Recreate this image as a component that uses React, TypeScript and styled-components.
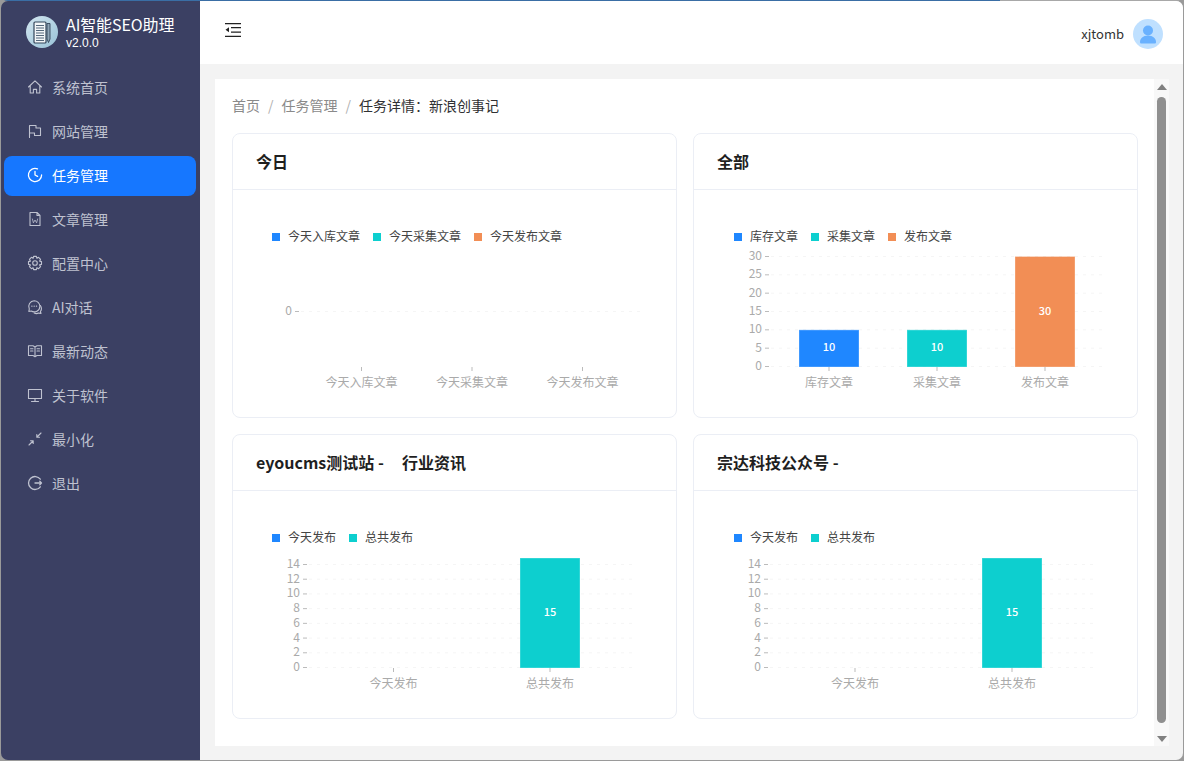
import React from 'react';
import styled, { createGlobalStyle } from 'styled-components';

const GlobalStyle = createGlobalStyle`
  html, body, #root {
    margin: 0;
    height: 100%;
    overflow: hidden;
  }
  body {
    background: #9a9a9a;
    font-family: "Noto Sans CJK SC", "Liberation Sans", sans-serif;
  }
  * {
    box-sizing: border-box;
  }
`;

const Window = styled.div`
  display: flex;
  height: 761px;
  padding: 1px;
  border-radius: 8px;
  overflow: hidden;
  background: linear-gradient(90deg, #3a6ea5 1000px, #a8a8a8 1000px) top / 100% 1px no-repeat, #9a9a9a;
`;

const Sidebar = styled.aside`
  width: 199px;
  flex: none;
  background: #3b4063;
  padding-top: 13px;
  border-radius: 7px 0 0 7px;
`;

const Brand = styled.div`
  display: flex;
  align-items: center;
  gap: 8px;
  height: 36px;
  padding-left: 25px;
  margin-bottom: 18px;
`;

const BrandText = styled.div`
  color: #fff;
`;

const BrandName = styled.div`
  font-size: 16px;
  line-height: 20px;
  letter-spacing: -0.1px;
`;

const BrandVersion = styled.div`
  margin-top: 2px;
  font-family: "Liberation Sans", sans-serif;
  font-size: 12px;
  line-height: 14px;
`;

const Menu = styled.nav`
  display: flex;
  flex-direction: column;
  gap: 4px;
  padding: 0 4px 0 3px;
`;

const MenuItem = styled.div<{ $active?: boolean }>`
  display: flex;
  align-items: center;
  gap: 9px;
  height: 40px;
  padding: 0 0 2px 23px;
  border-radius: 8px;
  font-size: 14px;
  line-height: 20px;
  color: ${(p) => (p.$active ? '#fff' : '#bfc2d0')};
  background: ${(p) => (p.$active ? '#1677ff' : 'transparent')};
`;

const Main = styled.main`
  flex: 1;
  min-width: 0;
  display: flex;
  flex-direction: column;
  background: #f3f3f3;
  border-radius: 0 7px 7px 0;
  overflow: hidden;
`;

const Header = styled.header`
  height: 63px;
  flex: none;
  background: #fff;
  display: flex;
  align-items: center;
  justify-content: space-between;
  padding: 0 20px 0 24px;
`;

const ToggleIcon = styled.svg`
  margin-bottom: 5px;
`;

const User = styled.div`
  display: flex;
  align-items: center;
  gap: 9px;
  margin-top: 2px;
  font-size: 13px;
  color: #333;
`;

const Avatar = styled.div`
  width: 30px;
  height: 30px;
  border-radius: 50%;
  background: #bfe0ff;
  display: flex;
  align-items: center;
  justify-content: center;
`;

const Content = styled.div`
  flex: 1;
  min-height: 0;
  padding: 15px 14px 14px 15px;
`;

const Panel = styled.div`
  height: 100%;
  background: #fff;
  display: flex;
`;

const Scroller = styled.div`
  flex: 1;
  min-width: 0;
  padding: 0 16px 0 17px;
`;

const Crumbs = styled.div`
  display: flex;
  align-items: center;
  height: 54px;
  padding-bottom: 2px;
  font-size: 14px;
  color: #8a8a8a;
`;

const CrumbSep = styled.span`
  margin: 0 8px;
  color: #b0b0b0;
`;

const CrumbCurrent = styled.span`
  color: #303133;
`;

const Grid = styled.div`
  display: grid;
  grid-template-columns: 1fr 1fr;
  gap: 16px;
`;

const Card = styled.section`
  height: 285px;
  border: 1px solid #ebeef5;
  border-radius: 8px;
  overflow: hidden;
`;

const CardTitle = styled.h3`
  margin: 0 0 1px;
  height: 56px;
  padding: 0 0 2px 23px;
  display: flex;
  align-items: center;
  font-size: 16px;
  font-weight: 700;
  color: #1f1f1f;
  border-bottom: 1px solid #ebeef5;
  white-space: pre;
`;

const ScrollTrack = styled.div`
  width: 15px;
  flex: none;
  background: #f8f8f8;
  display: flex;
  flex-direction: column;
  align-items: center;
  padding-top: 5px;
`;

const ArrowUp = styled.div`
  width: 0;
  height: 0;
  border-left: 5px solid transparent;
  border-right: 5px solid transparent;
  border-bottom: 6px solid #808080;
  margin-bottom: 7px;
`;

const ArrowDown = styled.div`
  width: 0;
  height: 0;
  border-left: 5px solid transparent;
  border-right: 5px solid transparent;
  border-top: 6px solid #808080;
  margin-top: 13px;
`;

const Thumb = styled.div`
  width: 9px;
  height: 626px;
  border-radius: 5px;
  background: #8f8f8f;
`;

const ChartSvg = styled.svg`
  display: block;
`;

const LegendText = styled.text`
  font-size: 12px;
  fill: #444;
`;

const AxisText = styled.text`
  font-size: 12px;
  fill: #aaa;
`;

const BarText = styled.text`
  font-size: 11px;
  font-weight: 500;
  fill: #fff;
  text-anchor: middle;
`;

const BLUE = '#1f87ff';
const TEAL = '#0dcfcf';
const ORANGE = '#f28e55';

type LegendEntry = { x: number; label: string; color: string };
type Bar = { x: number; label: string; value: number; color: string };

type ChartProps = {
  legend: LegendEntry[];
  ticks: number[];
  yTop: number;
  yBottom: number;
  max: number;
  axisX: number;
  gridEnd: number;
  xBase: number;
  bars: Bar[];
  barTop?: number;
};

// coordinates are relative to the card body
const Chart = ({ legend, ticks, yTop, yBottom, max, axisX, gridEnd, xBase, bars, barTop }: ChartProps) => {
  const yOf = (v: number) => (max === 0 ? yTop : yBottom - ((yBottom - yTop) * v) / max);
  return (
    <ChartSvg width="443" height="227" viewBox="0 0 443 227">
      {legend.map((l) => (
        <React.Fragment key={l.label}>
          <rect x={l.x} y={42} width="8" height="8" fill={l.color} />
          <LegendText x={l.x + 16} y={50}>{l.label}</LegendText>
        </React.Fragment>
      ))}
      {ticks.map((t) => (
        <React.Fragment key={t}>
          <line x1={axisX + 6} x2={gridEnd} y1={yOf(t)} y2={yOf(t)} stroke="#f5f5f5" strokeDasharray="3 5" />
          <line x1={axisX} x2={axisX + 4} y1={yOf(t)} y2={yOf(t)} stroke="#bbb" />
          <AxisText x={axisX - 3} y={yOf(t) + 3.5} textAnchor="end">{t}</AxisText>
        </React.Fragment>
      ))}
      {bars.map((b) => {
        const top = b.value > max ? barTop ?? yTop : yOf(b.value);
        return (
          <React.Fragment key={b.label}>
            {b.value > 0 && (
              <>
                <rect x={b.x - 29.5} y={top + 0.5} width="59" height={yBottom - top - 0.5} fill={b.color} stroke={b.color} strokeOpacity="0.7" />
                <BarText x={b.x} y={(top + yBottom) / 2 + 3}>{b.value}</BarText>
              </>
            )}
            <line x1={b.x} x2={b.x} y1={xBase} y2={xBase + 4} stroke="#bbb" />
            <AxisText x={b.x} y={xBase + 20} textAnchor="middle">{b.label}</AxisText>
          </React.Fragment>
        );
      })}
    </ChartSvg>
  );
};

const ICON = { width: 16, height: 16, viewBox: '0 0 16 16', fill: 'none', stroke: 'currentColor', strokeWidth: 1.1, strokeLinejoin: 'round' as const, strokeLinecap: 'round' as const };

const icons: Record<string, React.ReactNode> = {
  home: <svg {...ICON}><path d="M1.5 8 8 1.8 14.5 8M3.2 6.6V14h3.2v-3.6h3.2V14h3.2V6.6" /></svg>,
  flag: <svg {...ICON}><path d="M2.5 14.500V2.500H9V5h4.500v7.500H7.500V10H2.500" /></svg>,
  clock: <svg {...ICON} strokeWidth={1.3}><path d="M10.5 1.9A6.6 6.6 0 1 0 14.6 8" /><path d="M8 4.4V8l2.6 1.4" /></svg>,
  doc: <svg {...ICON}><path d="M3 1.5h7l3 3v10H3zM10 1.5v3h3" /><path d="m5.4 8 1 3.8L8 9l1.6 2.8 1-3.8" strokeWidth={0.8} /></svg>,
  gear: <svg {...ICON}><path d="M6.6 1.4h2.8l.5 1.9 1.7-1 2 2-1 1.8 1.9.5v2.8l-1.9.5 1 1.8-2 2-1.7-1-.5 1.9H6.6l-.5-1.9-1.7 1-2-2 1-1.8L1.500 9.400V6.600l1.900-.5-1-1.800 2-2 1.700 1z" /><circle cx="8" cy="8" r="2.300" /></svg>,
  chat: <svg {...ICON}><path d="M7.200 1.800a5.700 5.700 0 0 1 5.700 5.400A5.700 5.700 0 0 1 4.200 12L1.800 12.500 2.300 10A5.700 5.700 0 0 1 7.200 1.800z" /><path d="M13.400 6.500c1.300 2 1.300 4.300 0 6l.6 1.900-2.400-.3c-1.500.8-3 .7-4.400-.1" /><path d="M4.800 7.200h.2M7.100 7.200h.2M9.400 7.200h.2" strokeWidth={1.200} /></svg>,
  book: <svg {...ICON}><path d="M8 4 6 2.800H1.500v9.700H6L8 13.700 10 12.500h4.500V2.800H10zM8 4v9.700" /><path d="M3.500 5.800h2.500M3.500 8h2.500M10 5.800h2.500M10 8h2.500" /></svg>,
  monitor: <svg {...ICON}><path d="M1.500 2.500h13v9h-13zM8 11.500v3M4.500 14.500h7" /></svg>,
  shrink: <svg {...ICON}><path d="M14 2 10 6M9.800 3.500v2.700h2.700M2 14l4-4M3.500 9.800h2.700v2.700" /></svg>,
  logout: <svg {...ICON} strokeWidth={1.300}><path d="M13.300 4.200A6.500 6.500 0 1 0 13.300 11.800" /><path d="M8 8h6.500M12.800 6.300 14.500 8l-1.700 1.700" /></svg>,
};

const Logo = () => (
  <svg width="32" height="32" viewBox="0 0 32 32">
    <defs>
      <linearGradient id="logoFill" x1="0" y1="0" x2="1" y2="1">
        <stop offset="0" stopColor="#d3e6f0" />
        <stop offset="1" stopColor="#98c2d7" />
      </linearGradient>
    </defs>
    <circle cx="16" cy="16" r="16" fill="url(#logoFill)" />
    <rect x="8" y="6" width="12" height="21" rx="1" fill="#f2f6f8" stroke="#33465a" strokeWidth="1.200" />
    <path d="M10 9.500h8M10 12h8M10 14.500h8M10 17h8M10 19.500h8M10 22h8M10 24.500h8" stroke="#55697c" strokeWidth="1" />
    <path d="M21 7.500h3V23l-1.500 3.500L21 23z" fill="#8ea6b8" stroke="#33465a" strokeWidth=".9" strokeLinejoin="round" />
  </svg>
);

const menu = [
  ['home', '系统首页'],
  ['flag', '网站管理'],
  ['clock', '任务管理'],
  ['doc', '文章管理'],
  ['gear', '配置中心'],
  ['chat', 'AI对话'],
  ['book', '最新动态'],
  ['monitor', '关于软件'],
  ['shrink', '最小化'],
  ['logout', '退出'],
];

const App = () => (
  <>
    <GlobalStyle />
    <Window>
      <Sidebar>
        <Brand>
          <Logo />
          <BrandText>
            <BrandName>AI智能SEO助理</BrandName>
            <BrandVersion>v2.0.0</BrandVersion>
          </BrandText>
        </Brand>
        <Menu>
          {menu.map(([icon, label]) => (
            <MenuItem key={label} $active={label === '任务管理'}>
              {icons[icon]}
              {label}
            </MenuItem>
          ))}
        </Menu>
      </Sidebar>
      <Main>
        <Header>
          <ToggleIcon width="18" height="16" viewBox="0 0 18 16" fill="#222">
            <path d="M1 1h16v1.300H1zM7 5h10v1.300H7zM7 9.500h10v1.300H7zM1 13.700h16V15H1zM5 5.300v5L1.500 7.800z" />
          </ToggleIcon>
          <User>
            xjtomb
            <Avatar>
              <svg width="20" height="20" viewBox="0 0 20 20" fill="#69b1ff">
                <circle cx="10" cy="6.500" r="5" />
                <path d="M2 18c0-3.500 3-6.500 8-6.500s8 3 8 6.500c0 1-.5 1.500-1.500 1.500h-13C2.500 19.500 2 19 2 18z" />
              </svg>
            </Avatar>
          </User>
        </Header>
        <Content>
          <Panel>
            <Scroller>
              <Crumbs>
                首页<CrumbSep>/</CrumbSep>任务管理<CrumbSep>/</CrumbSep>
                <CrumbCurrent>任务详情：新浪创事记</CrumbCurrent>
              </Crumbs>
              <Grid>
                <Card>
                  <CardTitle>今日</CardTitle>
                  <Chart
                    legend={[
                      { x: 39, label: '今天入库文章', color: BLUE },
                      { x: 140, label: '今天采集文章', color: TEAL },
                      { x: 241, label: '今天发布文章', color: ORANGE },
                    ]}
                    ticks={[0]}
                    yTop={120.500}
                    yBottom={120.500}
                    max={0}
                    axisX={62}
                    gridEnd={410}
                    xBase={176}
                    bars={[
                      { x: 128.500, label: '今天入库文章', value: 0, color: BLUE },
                      { x: 239, label: '今天采集文章', value: 0, color: TEAL },
                      { x: 349.500, label: '今天发布文章', value: 0, color: ORANGE },
                    ]}
                  />
                </Card>
                <Card>
                  <CardTitle>全部</CardTitle>
                  <Chart
                    legend={[
                      { x: 40, label: '库存文章', color: BLUE },
                      { x: 117, label: '采集文章', color: TEAL },
                      { x: 194, label: '发布文章', color: ORANGE },
                    ]}
                    ticks={[0, 5, 10, 15, 20, 25, 30]}
                    yTop={65.500}
                    yBottom={175.500}
                    max={30}
                    axisX={71}
                    gridEnd={408}
                    xBase={176}
                    bars={[
                      { x: 135, label: '库存文章', value: 10, color: BLUE },
                      { x: 243, label: '采集文章', value: 10, color: TEAL },
                      { x: 351, label: '发布文章', value: 30, color: ORANGE },
                    ]}
                  />
                </Card>
                <Card>
                  <CardTitle>{'eyoucms测试站 -     行业资讯'}</CardTitle>
                  <Chart
                    legend={[
                      { x: 39, label: '今天发布', color: BLUE },
                      { x: 116, label: '总共发布', color: TEAL },
                    ]}
                    ticks={[0, 2, 4, 6, 8, 10, 12, 14]}
                    yTop={72.500}
                    yBottom={175.500}
                    max={14}
                    axisX={70}
                    gridEnd={400}
                    xBase={176}
                    barTop={66}
                    bars={[
                      { x: 160.500, label: '今天发布', value: 0, color: BLUE },
                      { x: 317, label: '总共发布', value: 15, color: TEAL },
                    ]}
                  />
                </Card>
                <Card>
                  <CardTitle>宗达科技公众号 -</CardTitle>
                  <Chart
                    legend={[
                      { x: 40, label: '今天发布', color: BLUE },
                      { x: 117, label: '总共发布', color: TEAL },
                    ]}
                    ticks={[0, 2, 4, 6, 8, 10, 12, 14]}
                    yTop={72.500}
                    yBottom={175.500}
                    max={14}
                    axisX={70}
                    gridEnd={400}
                    xBase={176}
                    barTop={66}
                    bars={[
                      { x: 161, label: '今天发布', value: 0, color: BLUE },
                      { x: 318, label: '总共发布', value: 15, color: TEAL },
                    ]}
                  />
                </Card>
              </Grid>
            </Scroller>
            <ScrollTrack>
              <ArrowUp />
              <Thumb />
              <ArrowDown />
            </ScrollTrack>
          </Panel>
        </Content>
      </Main>
    </Window>
  </>
);

export default App;
